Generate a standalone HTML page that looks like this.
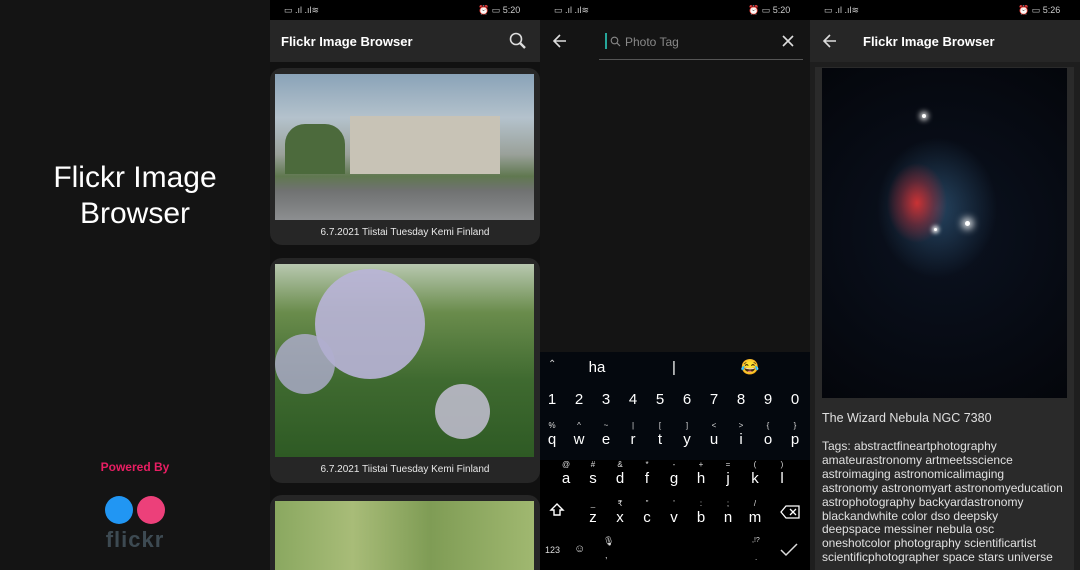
<!DOCTYPE html>
<html><head><meta charset="utf-8"><style>
*{margin:0;padding:0;box-sizing:border-box}
html,body{width:1080px;height:570px;overflow:hidden}
body{background:#141414;font-family:"Liberation Sans",sans-serif;position:relative}
.p{position:absolute;top:0;height:570px;width:270px;overflow:hidden}
.a{position:absolute}
.sb{position:absolute;left:0;top:0;width:270px;height:20px;background:#000;color:#ccc;font-size:9px}
.ab{position:absolute;left:0;top:20px;width:270px;height:42px;background:#262626;color:#fff}
.card{position:absolute;left:270px;width:270px;background:#262626;border-radius:12px;overflow:hidden}
.cap{position:absolute;left:0;width:270px;text-align:center;color:#e8e8e8;font-size:10px}
.k{position:absolute;color:#fff;font-size:15px;width:20px;text-align:center;margin-left:-10px}
.s{position:absolute;color:#ddd;font-size:8px;width:20px;text-align:center;margin-left:-10px}
</style></head><body>
<div class="p" style="left:0;background:#141414">
<div class="a" style="left:0;top:160px;width:270px;text-align:center;color:#fff;font-size:30px;line-height:36px">Flickr Image<br>Browser</div>
<div class="a" style="left:0;top:460px;width:270px;text-align:center;color:#e91e63;font-size:12px;font-weight:bold">Powered By</div>
<div class="a" style="left:105px;top:496px;width:28px;height:28px;border-radius:50%;background:#2196f3"></div>
<div class="a" style="left:137px;top:496px;width:28px;height:28px;border-radius:50%;background:#ec407a"></div>
<div class="a" style="left:0;top:527px;width:270px;text-align:center;color:#3d4a52;font-size:22px;font-weight:bold;letter-spacing:1px">flickr</div>
</div>
<div class="a" style="left:270px;top:0;width:270px;height:570px;background:#111"></div>
<div class="sb" style="left:270px"><span class="a" style="left:14px;top:5px">▭ .ıl .ıl≋</span><span class="a" style="left:208px;top:5px">⏰ ▭ 5:20</span></div>
<div class="ab" style="left:270px"><span class="a" style="left:11px;top:14px;font-size:13px;font-weight:bold">Flickr Image Browser</span>
<svg class="a" style="left:238px;top:11px" width="20" height="20" viewBox="0 0 20 20"><circle cx="8" cy="8" r="5.5" fill="none" stroke="#ddd" stroke-width="1.6"/><path d="M12 12 L17 17" stroke="#ddd" stroke-width="2.4"/></svg></div>
<div class="card" style="top:68px;height:177px"><div class="a" style="left:5px;top:6px;width:259px;height:146px;overflow:hidden;background:linear-gradient(180deg,#8aa3b8 0%,#b4c2cc 30%,#9aa19a 55%,#607850 70%,#707272 80%,#8c8e90 100%)"><div class="a" style="left:75px;top:42px;width:150px;height:58px;background:#c8c3b6"></div><div class="a" style="left:10px;top:50px;width:60px;height:50px;background:#4c6a3c;border-radius:20px 20px 0 0"></div></div><div class="cap" style="top:159px">6.7.2021 Tiistai Tuesday Kemi Finland</div></div>
<div class="card" style="top:258px;height:225px"><div class="a" style="left:5px;top:6px;width:259px;height:193px;overflow:hidden;background:linear-gradient(180deg,#b8c8b0 0%,#6a8c4c 25%,#3f6a30 60%,#2e5a24 100%)"><div class="a" style="left:40px;top:5px;width:110px;height:110px;border-radius:50%;background:#b9b4d8;opacity:.9"></div><div class="a" style="left:0;top:70px;width:60px;height:60px;border-radius:50%;background:#b0aed0;opacity:.8"></div><div class="a" style="left:160px;top:120px;width:55px;height:55px;border-radius:50%;background:#c4c0d4;opacity:.85"></div></div><div class="cap" style="top:206px">6.7.2021 Tiistai Tuesday Kemi Finland</div></div>
<div class="card" style="top:495px;height:75px;border-radius:12px 12px 0 0"><div class="a" style="left:5px;top:6px;width:259px;height:80px;background:linear-gradient(90deg,#8aa860,#a8bc78 30%,#7f9c55 60%,#a0b870)"></div></div>
<div class="a" style="left:540px;top:0;width:270px;height:570px;background:#141414"></div>
<div class="sb" style="left:540px"><span class="a" style="left:14px;top:5px">▭ .ıl .ıl≋</span><span class="a" style="left:208px;top:5px">⏰ ▭ 5:20</span></div>
<div class="ab" style="left:540px;background:#141414">
<svg class="a" style="left:12px;top:13px" width="16" height="16" viewBox="0 0 16 16"><path d="M14 8H2M8 2L2 8l6 6" fill="none" stroke="#ddd" stroke-width="1.6"/></svg>
<div class="a" style="left:65px;top:13px;width:2px;height:16px;background:#26a69a"></div>
<svg class="a" style="left:70px;top:16px" width="11" height="11" viewBox="0 0 11 11"><circle cx="4.5" cy="4.5" r="3.3" fill="none" stroke="#888" stroke-width="1.1"/><path d="M7 7l3 3" stroke="#888" stroke-width="1.2"/></svg>
<span class="a" style="left:85px;top:15px;font-size:12px;color:#888">Photo Tag</span>
<svg class="a" style="left:242px;top:15px" width="12" height="12" viewBox="0 0 12 12"><path d="M1 1l10 10M11 1L1 11" stroke="#ddd" stroke-width="1.6"/></svg>
<div class="a" style="left:59px;top:39px;width:204px;height:1px;background:#555"></div></div>
<div class="a" style="left:540px;top:352px;width:270px;height:218px;background:#04080e"></div>
<div class="a" style="left:540px;top:460px;width:270px;height:110px;background:#000"></div>
<div class="a" style="left:548px;top:359px;color:#ccc;font-size:10px">⌃</div>
<span class="k" style="left:597px;top:359px">ha</span><span class="k" style="left:674px;top:359px">|</span><span class="k" style="left:750px;top:358px">😂</span>
<span class="k" style="left:552px;top:391px">1</span><span class="k" style="left:579px;top:391px">2</span><span class="k" style="left:606px;top:391px">3</span><span class="k" style="left:633px;top:391px">4</span><span class="k" style="left:660px;top:391px">5</span><span class="k" style="left:687px;top:391px">6</span><span class="k" style="left:714px;top:391px">7</span><span class="k" style="left:741px;top:391px">8</span><span class="k" style="left:768px;top:391px">9</span><span class="k" style="left:795px;top:391px">0</span>
<span class="s" style="left:552px;top:421px">%</span><span class="s" style="left:579px;top:421px">^</span><span class="s" style="left:606px;top:421px">~</span><span class="s" style="left:633px;top:421px">|</span><span class="s" style="left:660px;top:421px">[</span><span class="s" style="left:687px;top:421px">]</span><span class="s" style="left:714px;top:421px">&lt;</span><span class="s" style="left:741px;top:421px">&gt;</span><span class="s" style="left:768px;top:421px">{</span><span class="s" style="left:795px;top:421px">}</span>
<span class="k" style="left:552px;top:431px">q</span><span class="k" style="left:579px;top:431px">w</span><span class="k" style="left:606px;top:431px">e</span><span class="k" style="left:633px;top:431px">r</span><span class="k" style="left:660px;top:431px">t</span><span class="k" style="left:687px;top:431px">y</span><span class="k" style="left:714px;top:431px">u</span><span class="k" style="left:741px;top:431px">i</span><span class="k" style="left:768px;top:431px">o</span><span class="k" style="left:795px;top:431px">p</span>
<span class="s" style="left:566px;top:460px">@</span><span class="s" style="left:593px;top:460px">#</span><span class="s" style="left:620px;top:460px">&amp;</span><span class="s" style="left:647px;top:460px">*</span><span class="s" style="left:674px;top:460px">-</span><span class="s" style="left:701px;top:460px">+</span><span class="s" style="left:728px;top:460px">=</span><span class="s" style="left:755px;top:460px">(</span><span class="s" style="left:782px;top:460px">)</span>
<span class="k" style="left:566px;top:470px">a</span><span class="k" style="left:593px;top:470px">s</span><span class="k" style="left:620px;top:470px">d</span><span class="k" style="left:647px;top:470px">f</span><span class="k" style="left:674px;top:470px">g</span><span class="k" style="left:701px;top:470px">h</span><span class="k" style="left:728px;top:470px">j</span><span class="k" style="left:755px;top:470px">k</span><span class="k" style="left:782px;top:470px">l</span>
<svg class="a" style="left:549px;top:502px" width="16" height="16" viewBox="0 0 16 16"><path d="M8 2L2 8h3v5h6V8h3z" fill="none" stroke="#fff" stroke-width="1.4"/></svg>
<span class="s" style="left:593px;top:499px">_</span><span class="s" style="left:620px;top:499px">₹</span><span class="s" style="left:647px;top:499px">"</span><span class="s" style="left:674px;top:499px">'</span><span class="s" style="left:701px;top:499px">:</span><span class="s" style="left:728px;top:499px">;</span><span class="s" style="left:755px;top:499px">/</span>
<span class="k" style="left:593px;top:509px">z</span><span class="k" style="left:620px;top:509px">x</span><span class="k" style="left:647px;top:509px">c</span><span class="k" style="left:674px;top:509px">v</span><span class="k" style="left:701px;top:509px">b</span><span class="k" style="left:728px;top:509px">n</span><span class="k" style="left:755px;top:509px">m</span>
<svg class="a" style="left:780px;top:505px" width="20" height="14" viewBox="0 0 20 14"><path d="M6 1h13v12H6L1 7z" fill="none" stroke="#fff" stroke-width="1.3"/><path d="M10 4l6 6M16 4l-6 6" stroke="#fff" stroke-width="1.3"/></svg>
<span class="a" style="left:545px;top:545px;color:#ddd;font-size:9px">123</span>
<span class="a" style="left:574px;top:543px;color:#ddd;font-size:11px">☺</span>
<span class="a" style="left:603px;top:536px;color:#ddd;font-size:9px">🎙</span><span class="a" style="left:605px;top:550px;color:#ddd;font-size:9px">,</span>
<span class="a" style="left:752px;top:537px;color:#ddd;font-size:7px">,!?</span><span class="a" style="left:755px;top:553px;color:#ddd;font-size:8px">.</span>
<svg class="a" style="left:779px;top:542px" width="20" height="16" viewBox="0 0 20 16"><path d="M2 8l5 5L18 2" fill="none" stroke="#ddd" stroke-width="1.5"/></svg>
<div class="a" style="left:810px;top:0;width:270px;height:570px;background:#1e1e1e"></div>
<div class="sb" style="left:810px"><span class="a" style="left:14px;top:5px">▭ .ıl .ıl≋</span><span class="a" style="left:208px;top:5px">⏰ ▭ 5:26</span></div>
<div class="ab" style="left:810px">
<svg class="a" style="left:12px;top:13px" width="16" height="16" viewBox="0 0 16 16"><path d="M14 8H2M8 2L2 8l6 6" fill="none" stroke="#ddd" stroke-width="1.6"/></svg>
<span class="a" style="left:53px;top:14px;font-size:13px;font-weight:bold">Flickr Image Browser</span></div>
<div class="a" style="left:815px;top:67px;width:259px;height:503px;background:#2a2a2a"></div>
<div class="a" style="left:822px;top:68px;width:245px;height:330px;overflow:hidden;background:radial-gradient(ellipse 30px 40px at 95px 135px,rgba(220,50,50,.9),rgba(160,40,50,.5) 55%,transparent 100%),radial-gradient(ellipse 60px 70px at 115px 140px,rgba(60,110,150,.55),transparent),radial-gradient(circle at 50% 50%,#0b1220,#04060b)">
<div class="a" style="left:100px;top:46px;width:4px;height:4px;background:#fff;border-radius:50%;box-shadow:0 0 6px 2px #fff"></div>
<div class="a" style="left:143px;top:153px;width:5px;height:5px;background:#fff;border-radius:50%;box-shadow:0 0 8px 3px #fff"></div>
<div class="a" style="left:112px;top:160px;width:3px;height:3px;background:#fff;border-radius:50%;box-shadow:0 0 4px 2px #fff"></div></div>
<div class="a" style="left:822px;top:411px;color:#e0e0e0;font-size:12.5px">The Wizard Nebula NGC 7380</div>
<div class="a" style="left:822px;top:440px;white-space:nowrap;color:#e0e0e0;font-size:12px;line-height:13.9px">Tags: abstractfineartphotography<br>amateurastronomy artmeetsscience<br>astroimaging astronomicalimaging<br>astronomy astronomyart astronomyeducation<br>astrophotography backyardastronomy<br>blackandwhite color dso deepsky<br>deepspace messiner nebula osc<br>oneshotcolor photography scientificartist<br>scientificphotographer space stars universe</div>
</body></html>
